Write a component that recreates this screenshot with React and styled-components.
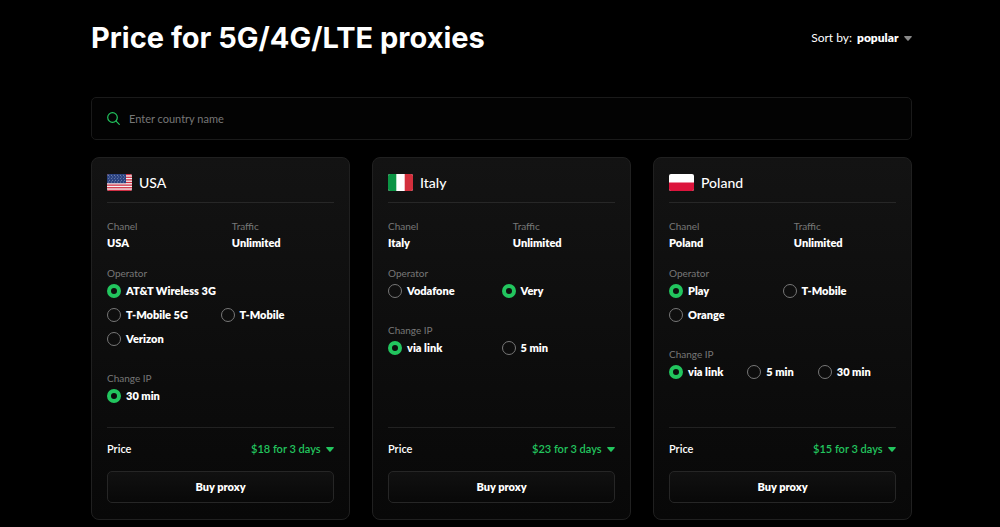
import React, { useState } from 'react';
import styled, { createGlobalStyle } from 'styled-components';

const GREEN = '#22c55e';

const countries = [
    {
        name: 'USA',
        price: '$18 for 3 days',
        operators: [
            { label: 'AT&T Wireless 3G', wide: true },
            { label: 'T-Mobile 5G' },
            { label: 'T-Mobile' },
            { label: 'Verizon' },
        ],
        operator: 'AT&T Wireless 3G',
        intervals: [{ label: '30 min' }],
        interval: '30 min',
    },
    {
        name: 'Italy',
        price: '$23 for 3 days',
        operators: [{ label: 'Vodafone' }, { label: 'Very' }],
        operator: 'Very',
        intervals: [{ label: 'via link' }, { label: '5 min' }],
        interval: 'via link',
    },
    {
        name: 'Poland',
        price: '$15 for 3 days',
        operators: [{ label: 'Play' }, { label: 'T-Mobile' }, { label: 'Orange' }],
        operator: 'Play',
        intervals: [{ label: 'via link' }, { label: '5 min' }, { label: '30 min' }],
        interval: 'via link',
    },
];

const GlobalStyle = createGlobalStyle`
    * {
        box-sizing: border-box;
    }
    body {
        margin: 0;
        background: #000;
        color: #fff;
        font-family: Lato, "Liberation Sans", sans-serif;
        font-size: 11px;
        line-height: 14px;
    }
    button, input, select {
        font: inherit;
        color: inherit;
    }
`;

const Page = styled.main`
    padding: 20px 88px 7px 91px;
`;

const Header = styled.header`
    display: flex;
    align-items: center;
    justify-content: space-between;
    margin-bottom: 41px;
`;

const Title = styled.h1`
    margin: 0;
    font-family: Inter, sans-serif;
    font-size: 29px;
    font-weight: 650;
    line-height: 36px;
`;

const SortLabel = styled.label`
    display: flex;
    align-items: center;
    gap: 5px;
    font-size: 12px;
`;

const SelectBox = styled.span`
    display: grid;
    align-items: center;
    color: ${props => props.$color || 'inherit'};

    & > * {
        grid-area: 1 / 1;
    }
    & > svg {
        justify-self: end;
        pointer-events: none;
    }
`;

const SelectField = styled.select`
    appearance: none;
    padding: 0 13px 0 0;
    border: none;
    background: none;
    font-weight: ${props => props.$weight || 800};
    cursor: pointer;
`;

const SearchBox = styled.label`
    display: flex;
    align-items: center;
    gap: 9px;
    height: 43px;
    margin-bottom: 17px;
    padding: 0 15px;
    border: 1px solid #1a1a1a;
    border-radius: 5px;
    background: #030303;
`;

const SearchInput = styled.input`
    flex: 1;
    min-width: 0;
    padding: 0;
    border: none;
    outline: none;
    background: none;

    &::placeholder {
        color: #777;
    }
`;

const CardGrid = styled.section`
    display: grid;
    grid-template-columns: repeat(3, 1fr);
    gap: 22px;
`;

const Card = styled.article`
    display: flex;
    flex-direction: column;
    padding: 16px 15px;
    border: 1px solid #202020;
    border-radius: 8px;
    background: linear-gradient(#131313, #080808);
`;

const CardHeader = styled.div`
    display: flex;
    align-items: center;
    gap: 7px;
    padding-bottom: 11px;
    border-bottom: 1px solid #272727;
`;

const CountryName = styled.h2`
    margin: 0;
    font-size: 14px;
    font-weight: 500;
    line-height: 17px;
`;

const InfoGrid = styled.dl`
    display: grid;
    grid-template-columns: 55% 45%;
    margin: 16px 0;
`;

const InfoLabel = styled.dt`
    margin-bottom: 3px;
    color: #777;
    font-size: 10px;
`;

const InfoValue = styled.dd`
    margin: 0;
    font-weight: 800;
`;

const Group = styled.fieldset`
    min-width: 0;
    margin: 0;
    padding: 0;
    border: none;

    & + & {
        margin-top: 25px;
    }
`;

const Legend = styled.legend`
    margin-bottom: 4px;
    padding: 0;
    color: #777;
    font-size: 10px;
`;

const Options = styled.div`
    display: ${props => (props.$inline ? 'flex' : 'grid')};
    grid-template-columns: 1fr 1fr;
    gap: ${props => (props.$inline ? '10px 24px' : '10px 0')};
`;

const Option = styled.label`
    display: flex;
    align-items: center;
    gap: 5px;
    grid-column: ${props => (props.$wide ? '1 / -1' : 'auto')};
    font-weight: 800;
    white-space: nowrap;
    cursor: pointer;
`;

const Radio = styled.input`
    appearance: none;
    flex: none;
    width: 14px;
    height: 14px;
    margin: 0;
    border: 1px solid #777;
    border-radius: 50%;

    &:checked {
        border: 4px solid ${GREEN};
    }
`;

const CardFooter = styled.div`
    margin-top: auto;
    padding-top: 24px;
`;

const PriceRow = styled.label`
    display: flex;
    align-items: center;
    justify-content: space-between;
    margin-bottom: 15px;
    padding-top: 14px;
    border-top: 1px solid #222;
    font-weight: 600;
`;

const BuyButton = styled.button`
    width: 100%;
    height: 32px;
    border: 1px solid #262626;
    border-radius: 5px;
    background: linear-gradient(#111, #080808);
    font-weight: 800;
    cursor: pointer;
`;

const SearchIcon = () => (
    <svg width="13" height="13" viewBox="0 0 13 13" fill="none" stroke={GREEN} strokeWidth="1.2" strokeLinecap="round">
        <circle cx="5.5" cy="5.5" r="4.8" />
        <path d="M9.1 9.1 12.3 12.3" />
    </svg>
);

const Caret = ({ color }) => (
    <svg width="8" height="5" viewBox="0 0 8 5" fill={color}>
        <path d="M.8 0h6.4c.6 0 .9.6.5 1L4.6 4.6a.8.8 0 0 1-1.2 0L.3 1C-.1.6.2 0 .8 0Z" />
    </svg>
);

const flags = {
    USA: (
        <>
            <rect width="25" height="17" fill="#f5f5f5" />
            {[0, 2, 4, 6, 8, 10, 12].map(row => (
                <rect key={row} y={row * 17 / 13} width="25" height={17 / 13} fill="#d02f44" />
            ))}
            <rect width="19" height="9.2" fill="#2b4380" />
            {[1.2, 2.9, 4.6, 6.3, 8].map((y, i) =>
                [1.5, 4.5, 7.5, 10.5, 13.5, 16.5].map(x => (
                    <circle key={`${x}-${y}`} cx={x + (i % 2) * 1.2} cy={y} r=".45" fill="#c3cce2" />
                ))
            )}
        </>
    ),
    Italy: (
        <>
            <rect width="25" height="17" fill="#fff" />
            <rect width="8.3" height="17" fill="#0b9444" />
            <rect x="16.7" width="8.3" height="17" fill="#d32f3c" />
        </>
    ),
    Poland: (
        <>
            <rect width="25" height="17" fill="#fff" />
            <rect y="8.5" width="25" height="8.5" fill="#dc143c" />
        </>
    ),
};

const FlagIcon = styled.svg`
    flex: none;
    border-radius: 2px;
`;

const OptionGroup = ({ name, title, options, value, onChange }) => (
    <Group>
        <Legend>{title}</Legend>
        <Options $inline={options.length === 3 && name.endsWith('interval')}>
            {options.map(({ label, wide }) => (
                <Option key={label} $wide={wide}>
                    <Radio
                        type="radio"
                        name={name}
                        checked={value === label}
                        onChange={() => onChange(label)}
                    />
                    {label}
                </Option>
            ))}
        </Options>
    </Group>
);

const CountryCard = ({ country }) => {
    const [operator, setOperator] = useState(country.operator);
    const [interval, setInterval] = useState(country.interval);

    return (
        <Card>
            <CardHeader>
                <FlagIcon width="25" height="17" viewBox="0 0 25 17">{flags[country.name]}</FlagIcon>
                <CountryName>{country.name}</CountryName>
            </CardHeader>
            <InfoGrid>
                <div>
                    <InfoLabel>Chanel</InfoLabel>
                    <InfoValue>{country.name}</InfoValue>
                </div>
                <div>
                    <InfoLabel>Traffic</InfoLabel>
                    <InfoValue>Unlimited</InfoValue>
                </div>
            </InfoGrid>
            <OptionGroup
                name={`${country.name}-operator`}
                title="Operator"
                options={country.operators}
                value={operator}
                onChange={setOperator}
            />
            <OptionGroup
                name={`${country.name}-interval`}
                title="Change IP"
                options={country.intervals}
                value={interval}
                onChange={setInterval}
            />
            <CardFooter>
                <PriceRow>
                    Price
                    <SelectBox $color={GREEN}>
                        <SelectField $weight={600}>
                            <option>{country.price}</option>
                        </SelectField>
                        <Caret color={GREEN} />
                    </SelectBox>
                </PriceRow>
                <BuyButton type="button">Buy proxy</BuyButton>
            </CardFooter>
        </Card>
    );
};

const App = () => {
    const [search, setSearch] = useState('');
    const visible = countries.filter(({ name }) => name.toLowerCase().includes(search.toLowerCase()));

    return (
        <>
            <GlobalStyle />
            <Page>
                <Header>
                    <Title>Price for 5G/4G/LTE proxies</Title>
                    <SortLabel>
                        Sort by:
                        <SelectBox>
                            <SelectField>
                                <option>popular</option>
                            </SelectField>
                            <Caret color="#888" />
                        </SelectBox>
                    </SortLabel>
                </Header>
                <SearchBox>
                    <SearchIcon />
                    <SearchInput
                        type="text"
                        placeholder="Enter country name"
                        value={search}
                        onChange={e => setSearch(e.target.value)}
                    />
                </SearchBox>
                <CardGrid>
                    {visible.map(country => (
                        <CountryCard key={country.name} country={country} />
                    ))}
                </CardGrid>
            </Page>
        </>
    );
};

export default App;
